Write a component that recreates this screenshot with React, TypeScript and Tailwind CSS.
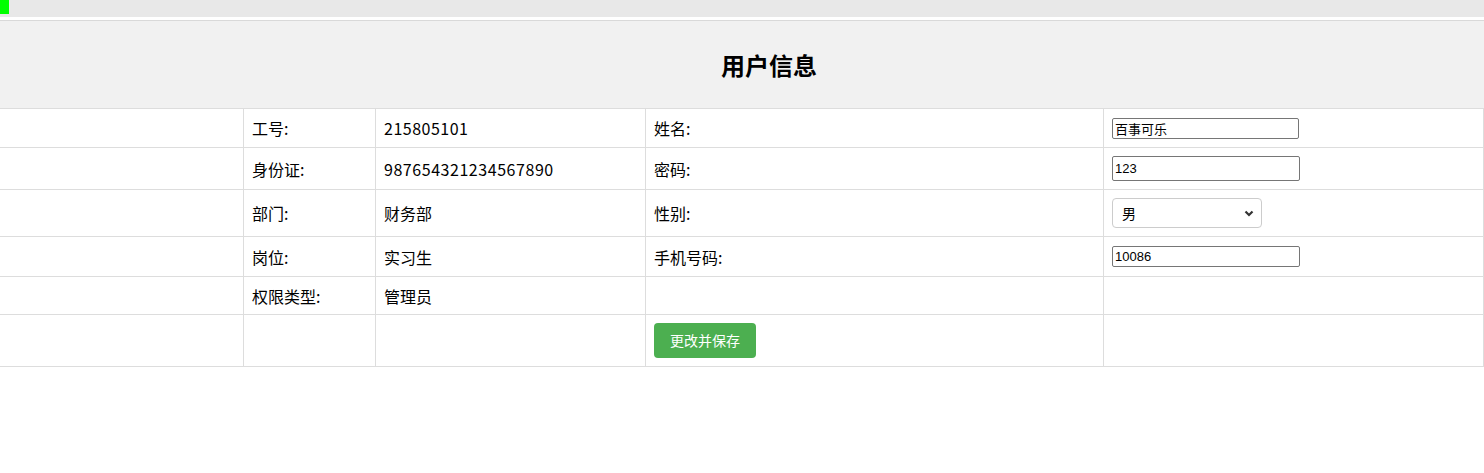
import React, { useState } from 'react';

const cell = 'flex items-center border-r border-b border-[#dddddd] px-[8px]';

export default function App() {
    const [name, setName] = useState('百事可乐');
    const [password, setPassword] = useState('123');
    const [gender, setGender] = useState('男');
    const [phone, setPhone] = useState('10086');

    const inputCls = 'w-[187px] border border-[#767676] rounded-[2px] px-[2px] text-[13px] text-black outline-none bg-white';
    const inputFont = { fontFamily: '"Liberation Sans", "Noto Sans CJK SC", sans-serif' };

    return (
        <div className="w-[1484px] h-[473px] bg-white text-black" style={{ fontFamily: '"Noto Sans CJK SC", "Noto Sans", sans-serif' }}>
            <div className="h-[17px] bg-[#e8e8e8]">
                <div className="w-[9px] h-[14px] bg-[#00ff00]" />
            </div>
            <div className="h-[3px] bg-white" />
            <div className="h-[88px] border-t border-[#d9d9d9] bg-[#f1f1f1] flex items-center justify-center">
                <h1 className="text-[24px] font-bold ml-[54px] leading-none">用户信息</h1>
            </div>

            <div className="grid grid-cols-[244px_132px_270px_458px_1fr] border-t border-[#dddddd] text-[16px]">
                {/* row 1 */}
                <div className={`${cell} h-[39px]`} />
                <div className={`${cell} h-[39px]`}>工号:</div>
                <div className={`${cell} h-[39px] tracking-[0.5px]`}>215805101</div>
                <div className={`${cell} h-[39px]`}>姓名:</div>
                <div className={`${cell} h-[39px]`}>
                    <input value={name} onChange={(e) => setName(e.target.value)} className={`${inputCls} h-[21px]`} style={inputFont} />
                </div>

                {/* row 2 */}
                <div className={`${cell} h-[42px]`} />
                <div className={`${cell} h-[42px]`}>身份证:</div>
                <div className={`${cell} h-[42px] tracking-[0.55px]`}>987654321234567890</div>
                <div className={`${cell} h-[42px]`}>密码:</div>
                <div className={`${cell} h-[42px]`}>
                    <input value={password} onChange={(e) => setPassword(e.target.value)} className={`${inputCls} h-[25px] w-[188px]`} style={inputFont} />
                </div>

                {/* row 3 */}
                <div className={`${cell} h-[47px]`} />
                <div className={`${cell} h-[47px]`}>部门:</div>
                <div className={`${cell} h-[47px]`}>财务部</div>
                <div className={`${cell} h-[47px]`}>性别:</div>
                <div className={`${cell} h-[47px]`}>
                    <div className="relative w-[150px] h-[30px]">
                        <select
                            value={gender}
                            onChange={(e) => setGender(e.target.value)}
                            className="appearance-none w-full h-full border border-[#cccccc] rounded-[4px] pl-[9px] text-[14px] bg-white outline-none"
                        >
                            <option value="男">男</option>
                            <option value="女">女</option>
                        </select>
                        <svg className="absolute right-[8px] top-[12px] pointer-events-none" width="10" height="7" viewBox="0 0 10 7">
                            <path d="M1.5 1.5 L5 5 L8.5 1.5" fill="none" stroke="#333" strokeWidth="2.2" />
                        </svg>
                    </div>
                </div>

                {/* row 4 */}
                <div className={`${cell} h-[40px]`} />
                <div className={`${cell} h-[40px]`}>岗位:</div>
                <div className={`${cell} h-[40px]`}>实习生</div>
                <div className={`${cell} h-[40px]`}>手机号码:</div>
                <div className={`${cell} h-[40px]`}>
                    <input value={phone} onChange={(e) => setPhone(e.target.value)} className={`${inputCls} h-[21px] w-[188px]`} style={inputFont} />
                </div>

                {/* row 5 */}
                <div className={`${cell} h-[38px]`} />
                <div className={`${cell} h-[38px]`}>权限类型:</div>
                <div className={`${cell} h-[38px]`}>管理员</div>
                <div className={`${cell} h-[38px]`} />
                <div className={`${cell} h-[38px]`} />

                {/* row 6 */}
                <div className={`${cell} h-[52px]`} />
                <div className={`${cell} h-[52px]`} />
                <div className={`${cell} h-[52px]`} />
                <div className={`${cell} h-[52px]`}>
                    <button className="w-[102px] h-[35px] bg-[#4caf50] text-white text-[14px] rounded-[4px]">更改并保存</button>
                </div>
                <div className={`${cell} h-[52px]`} />
            </div>
        </div>
    );
}
